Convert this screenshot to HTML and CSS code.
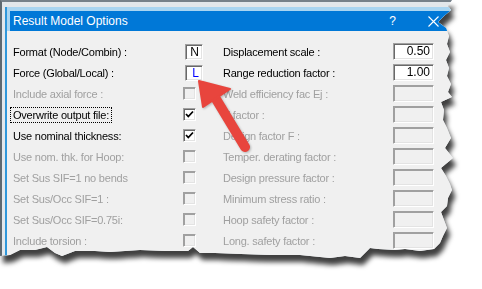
FILE: index.html
```html
<!DOCTYPE html>
<html lang="en">
<head>
  <meta charset="UTF-8" />
  <title>Result Model Options</title>
  <link rel="stylesheet" href="styles.css">
</head>
<body>
<div class="paper">
  <div class="frame">
    <div class="dialog">
      <div class="titlebar-wrap">
        <div class="titlebar">
          <span class="title">Result Model Options</span>
          <span class="help">?</span>
          <svg class="close" width="11" height="11" viewBox="0 0 11 11">
            <path d="M0.5 0.5 L10.5 10.5 M10.5 0.5 L0.5 10.5" stroke="#fff" stroke-width="1.1" fill="none"/>
          </svg>
        </div>
      </div>

      <div class="options">
        <span class="label">Format (Node/Combin) :</span>
        <span class="edit small">N</span>
        <span class="label">Displacement scale :</span>
        <span class="edit wide">0.50</span>

        <span class="label">Force (Global/Local) :</span>
        <span class="edit small blue">L</span>
        <span class="label">Range reduction factor :</span>
        <span class="edit wide">1.00</span>

        <span class="label off">Include axial force :</span>
        <span class="check off"></span>
        <span class="label off">Weld efficiency fac Ej :</span>
        <span class="edit wide off"></span>

        <span class="label"><span class="focus">Overwrite output file:</span></span>
        <span class="check"><svg width="11" height="11" viewBox="0 0 11 11"><path d="M2 5 L4.3 7.5 L9 2.5" stroke="#000" stroke-width="1.8" fill="none"/></svg></span>
        <span class="label off">Y factor :</span>
        <span class="edit wide off"></span>

        <span class="label">Use nominal thickness:</span>
        <span class="check"><svg width="11" height="11" viewBox="0 0 11 11"><path d="M2 5 L4.3 7.5 L9 2.5" stroke="#000" stroke-width="1.8" fill="none"/></svg></span>
        <span class="label off">Design factor F :</span>
        <span class="edit wide off"></span>

        <span class="label off">Use nom. thk. for Hoop:</span>
        <span class="check off"></span>
        <span class="label off">Temper. derating factor :</span>
        <span class="edit wide off"></span>

        <span class="label off">Set Sus SIF=1 no bends</span>
        <span class="check off"></span>
        <span class="label off">Design pressure factor :</span>
        <span class="edit wide off"></span>

        <span class="label off">Set Sus/Occ SIF=1 :</span>
        <span class="check off"></span>
        <span class="label off">Minimum stress ratio :</span>
        <span class="edit wide off"></span>

        <span class="label off">Set Sus/Occ SIF=0.75i:</span>
        <span class="check off"></span>
        <span class="label off">Hoop safety factor :</span>
        <span class="edit wide off"></span>

        <span class="label off">Include torsion :</span>
        <span class="check off"></span>
        <span class="label off">Long. safety factor :</span>
        <span class="edit wide off"></span>
      </div>
    </div>
  </div>
</div>

<!-- callout arrow pointing at the Force box -->
<svg class="arrow" width="482" height="289" viewBox="0 0 482 289">
  <line x1="216" y1="99" x2="245" y2="147" stroke="#e8453d" stroke-width="10" stroke-linecap="round"/>
  <polygon points="199,81 230,89 203,107" fill="#e8453d" stroke="#e8453d" stroke-width="2" stroke-linejoin="round"/>
</svg>
</body>
</html>
```

FILE: styles.css
```css
body {
  margin: 0;
  width: 482px;
  height: 289px;
  overflow: hidden;
  position: relative;
  background: #fff;
  font-family: "Liberation Sans", Arial, sans-serif;
  font-size: 11px;
  color: #000;
}

.paper {
  width: 462px;
  filter: drop-shadow(3px 7px 2.5px rgba(0, 0, 0, 0.75));
}

.frame {
  height: 262px;
  box-sizing: border-box;
  background: #e2e7eb;
  border-left: 2px solid #5d6870;
  border-top: 2px solid #76818a;
  padding: 5px 0 0 3px;
  clip-path: polygon(0 0, 452px 0, 448px 6px, 451px 10px, 444px 16px, 438px 22px, 446px 28px, 449px 36px, 447px 44px, 450px 52px, 446px 60px, 449px 68px, 447px 76px, 451px 84px, 448px 92px, 452px 97px, 441px 102px, 444px 110px, 443px 120px, 447px 128px, 451px 138px, 445px 148px, 453px 158px, 441px 168px, 446px 176px, 450px 184px, 452px 190px, 448px 198px, 447px 206px, 441px 212px, 444px 220px, 447px 228px, 443px 236px, 440px 243px, 434px 249px, 420px 251px, 405px 249px, 395px 250px, 378px 249px, 370px 248px, 360px 258px, 345px 256px, 330px 258px, 300px 255px, 270px 255px, 241px 254px, 215px 253px, 200px 253px, 193px 247px, 188px 251px, 165px 251px, 140px 250px, 110px 252px, 95px 251px, 75px 251px, 62px 256px, 55px 253px, 47px 247px, 35px 250px, 20px 250px, 10px 255px, 0 256px);
}

.dialog {
  height: 100%;
  background: #f0f0f0;
  border-left: 2px solid #2f97da;
}

.titlebar-wrap {
  background: #a9d5f1;
  padding: 4px 0 0 3px;
}

.titlebar {
  height: 20px;
  background: #0078d7;
  color: #fff;
  display: flex;
  align-items: center;
  padding: 0 23px 0 3px;
  font-size: 12px;
}

.title {
  flex: 1;
}

.help {
  margin-right: 32px;
  font-size: 12px;
}

.options {
  display: grid;
  grid-template-columns: 170px 40px 170px 41px;
  grid-auto-rows: 21px;
  align-items: center;
  padding: 10px 0 0 6px;
}

.label {
  letter-spacing: -0.22px;
}

.label.off {
  color: #a0a0a0;
}

.focus {
  outline: 1px dotted #000;
  outline-offset: 1px;
  padding: 0 1px;
  margin-left: -1px;
}

.edit {
  box-sizing: border-box;
  background: #fff;
  border-top: 1px solid #a0a0a0;
  border-left: 1px solid #a0a0a0;
  border-right: 1px solid #fff;
  border-bottom: 1px solid #fff;
  box-shadow: inset 1px 1px 0 #696969, inset -1px -1px 0 #e3e3e3;
  text-align: right;
  padding-right: 3px;
  line-height: 14px;
  font-size: 12px;
}

.edit.small {
  width: 18px;
  height: 16px;
  margin-left: 2px;
}

.edit.wide {
  width: 41px;
  height: 17px;
}

.edit.off {
  background: #f0f0f0;
  box-shadow: inset 1px 1px 0 #a0a0a0, inset -1px -1px 0 #e3e3e3;
}

.blue {
  color: #0000ff;
}

.check {
  box-sizing: border-box;
  width: 13px;
  height: 13px;
  background: #fff;
  border-top: 1px solid #a0a0a0;
  border-left: 1px solid #a0a0a0;
  border-right: 1px solid #fff;
  border-bottom: 1px solid #fff;
  box-shadow: inset 1px 1px 0 #696969, inset -1px -1px 0 #e3e3e3;
  display: flex;
}

.check.off {
  background: #f0f0f0;
  box-shadow: inset 1px 1px 0 #a0a0a0, inset -1px -1px 0 #e3e3e3;
}

.arrow {
  position: absolute;
  left: 0;
  top: 0;
  filter: drop-shadow(1px 1px 1px rgba(0, 0, 0, 0.25));
}
```
